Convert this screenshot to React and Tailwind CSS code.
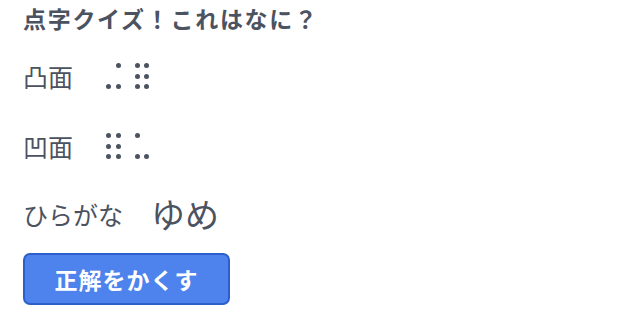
const jp = {
  fontFamily: '"Noto Sans CJK JP", "Noto Sans", sans-serif',
};

// braille cells, dots numbered 1-6 (1,2,3 left column top-down; 4,5,6 right column)
const rows = [
  { label: "凸面", char: "⠬⠿", cells: [[3, 4, 6], [1, 2, 3, 4, 5, 6]], mt: "mt-[20px]" },
  { label: "凹面", char: "⠿⠥", cells: [[1, 2, 3, 4, 5, 6], [1, 3, 6]], mt: "mt-[30px]" },
];

const order = [1, 4, 2, 5, 3, 6];

const BrailleCell = ({ dots }) => (
  <span className="grid grid-cols-[5px_5px] grid-rows-[5px_5px_5px] gap-x-[4.5px] gap-y-[5.3px]">
    {order.map((n) => (
      <span
        key={n}
        className={`w-[5px] h-[5px] rounded-full ${dots.includes(n) ? "bg-[#4b5260]" : ""}`}
      />
    ))}
  </span>
);

export default function App() {
  return (
    <div className="w-[622px] h-[312px] bg-white text-[#4b5260] px-[23px]" style={jp}>
      <h1 className="h-[36px] flex items-center text-[23px] font-bold leading-none tracking-[1.7px]">
        点字クイズ！これはなに？
      </h1>

      {rows.map((row) => (
        <div key={row.label} className={`flex items-center h-[40px] ${row.mt}`}>
          <span className="w-[83px] text-[25px] leading-none">{row.label}</span>
          <span className="flex gap-[14px]" role="img" aria-label={row.char} title={row.char}>
            {row.cells.map((dots, i) => (
              <BrailleCell key={i} dots={dots} />
            ))}
          </span>
        </div>
      ))}

      <div className="flex items-center h-[40px] mt-[28px]">
        <span className="text-[25px] leading-none">ひらがな</span>
        <span className="ml-[28px] text-[34px] leading-none">ゆめ</span>
      </div>

      <button
        type="button"
        className="mt-[19px] w-[207px] h-[52px] rounded-[7px] border-2 border-[#2c5fc9] bg-[#4e83ed] text-white text-[23px] font-bold leading-none tracking-[1px]"
      >
        正解をかくす
      </button>
    </div>
  );
}
